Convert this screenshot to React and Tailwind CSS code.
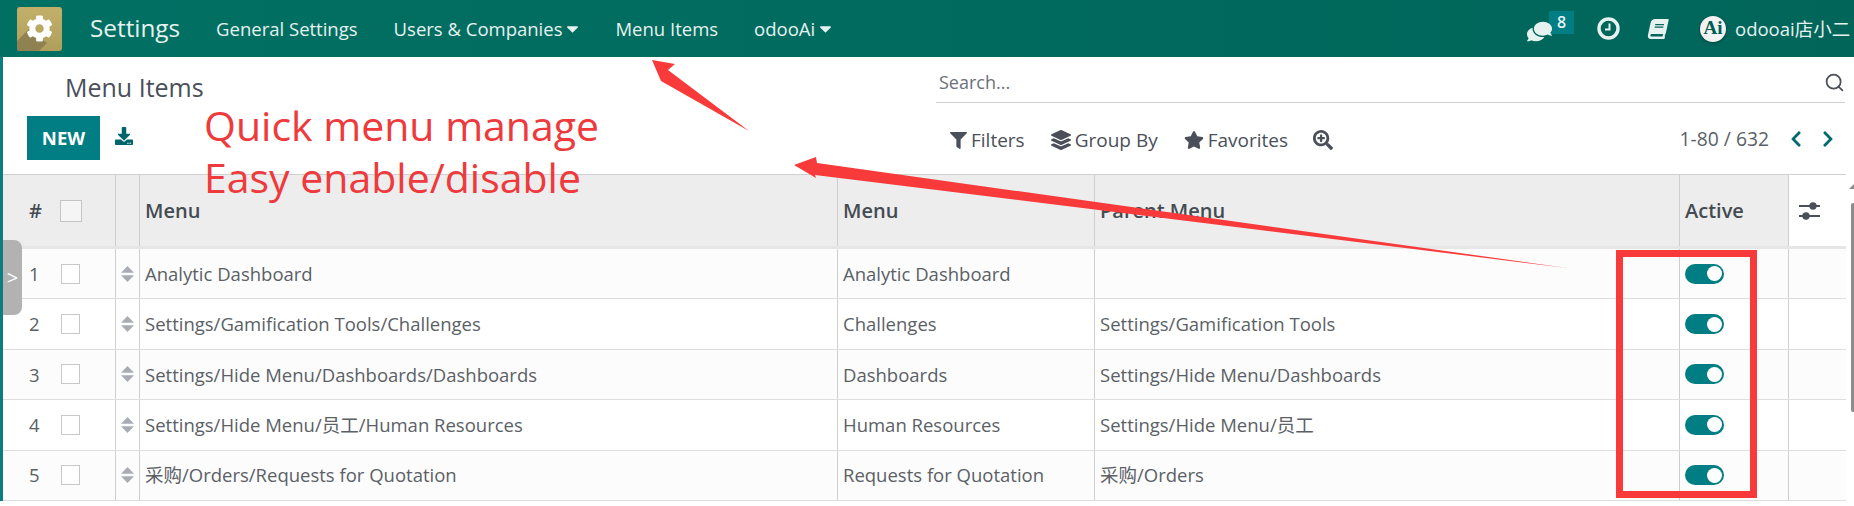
import React from 'react';
import { FaCog, FaComments, FaBook, FaDownload, FaFilter, FaLayerGroup, FaStar, FaSearchPlus, FaChevronLeft, FaChevronRight, FaCaretDown } from 'react-icons/fa';
import { Search } from 'lucide-react';

const rows = [
  ['Analytic Dashboard', 'Analytic Dashboard', ''],
  ['Settings/Gamification Tools/Challenges', 'Challenges', 'Settings/Gamification Tools'],
  ['Settings/Hide Menu/Dashboards/Dashboards', 'Dashboards', 'Settings/Hide Menu/Dashboards'],
  ['Settings/Hide Menu/员工/Human Resources', 'Human Resources', 'Settings/Hide Menu/员工'],
  ['采购/Orders/Requests for Quotation', 'Requests for Quotation', '采购/Orders'],
];

const gridCols = 'grid grid-cols-[113px_24px_698px_257px_585px_109px_57px]';

const Toggle = () => (
  <div className="w-[39px] h-[20px] rounded-full bg-[#017e84] flex items-center justify-end pr-[2px]">
    <div className="w-[15px] h-[15px] rounded-full bg-white" />
  </div>
);

const SortHandle = () => (
  <svg width="13" height="16" viewBox="0 0 13 16" className="text-[#a9adb3]">
    <path d="M6.5 0 L13 6.8 H0 Z M6.5 16 L13 9.2 H0 Z" fill="currentColor" />
  </svg>
);

const NavLink = ({ label, caret }) => (
  <div className="flex items-center text-[18.5px] text-[#e6f2f0]">
    {label}
    {caret && <FaCaretDown className="text-[19px] ml-[1px] -mr-[3px]" />}
  </div>
);

const ToolButton = ({ icon, label }) => (
  <div className="flex items-center gap-[4px] text-[19px] text-[#4a4f59]">
    {icon}
    <span>{label}</span>
  </div>
);

const Logo = () => (
  <div className="relative w-[45px] h-[44px] rounded-[3px] overflow-hidden bg-gradient-to-b from-[#c2b06a] to-[#b09f5b] flex items-center justify-center">
    <svg className="absolute left-0 top-0" width="45" height="44" viewBox="0 0 45 44">
      <path d="M12 22 L30 36 L22 44 L0 44 L0 34 Z" fill="#8f8150" />
    </svg>
    <FaCog className="relative text-white text-[27px]" />
  </div>
);

const ClockIcon = () => (
  <svg width="23" height="23" viewBox="0 0 23 23">
    <circle cx="11.5" cy="11.5" r="9.5" fill="none" stroke="#e6f2f0" strokeWidth="3.4" />
    <path d="M12.5 6.5 V12.5 H8" fill="none" stroke="#e6f2f0" strokeWidth="2" />
  </svg>
);

const App = () => {
  return (
    <div className="relative w-[1854px] h-[506px] overflow-hidden bg-white text-[#4c4c4c] font-['Open_Sans','Noto_Sans_CJK_SC',sans-serif]">
      <nav className="h-[57px] bg-gradient-to-r from-[#017063] to-[#01655a] flex items-center pl-[17px]">
        <Logo />
        <div className="ml-[28px] text-[24.3px] text-[#e6f2f0]">Settings</div>
        <div className="ml-[36px] flex items-center gap-[36px]">
          <NavLink label="General Settings" />
          <NavLink label="Users & Companies" caret />
          <NavLink label="Menu Items" />
          <NavLink label="odooAi" caret />
        </div>
        <div className="ml-auto flex items-center text-[#e6f2f0]">
          <div className="flex items-start">
            <FaComments className="text-[25px] mt-[5px] -scale-x-100" />
            <div className="w-[25px] h-[23px] bg-[#017e84] text-[16px] font-semibold flex items-center justify-center -mt-[3px] -ml-[3px]">8</div>
          </div>
          <div className="ml-[23px]"><ClockIcon /></div>
          <FaBook className="text-[20px] ml-[28px] -skew-x-12" />
          <div className="ml-[32px] w-[26px] h-[26px] rounded-full bg-[#f2f2f2] shadow-[0_1px_3px_rgba(0,0,0,0.35)] text-[#015c52] text-[19px] font-bold flex items-center justify-center font-['Liberation_Serif',serif]">Ai</div>
          <div className="ml-[9px] w-[119px] whitespace-nowrap overflow-hidden text-[18.5px]">odooai店小二</div>
        </div>
      </nav>

      <div className="border-l-[3px] border-[#0a7d80]">
        <div className="h-[117px] flex">
          <div className="w-[933px] pl-[24px]">
            <div className="pl-[38px] pt-[15px] text-[25px] leading-[30px] text-[#4a4f59]">Menu Items</div>
            <div className="mt-[14px] flex items-center">
              <div className="w-[73px] h-[44px] bg-[#017e84] text-white text-[18.5px] font-bold flex items-center justify-center">NEW</div>
              <FaDownload className="ml-[15px] -mt-[4px] text-[18px] text-[#01666b]" />
            </div>
          </div>
          <div className="flex-1 pr-[9px]">
            <div className="h-[46px] border-b border-[#cfcfd4] flex items-center justify-between pl-[3px] pt-[6px] text-[18px] text-[#6c7079]">
              <span>Search...</span>
              <Search size={21} className="text-[#4a4f59]" />
            </div>
            <div className="h-[70px] flex items-center pl-[14px] pt-[4px]">
              <ToolButton icon={<FaFilter className="text-[17px]" />} label="Filters" />
              <div className="ml-[26px]"><ToolButton icon={<FaLayerGroup className="text-[20px]" />} label="Group By" /></div>
              <div className="ml-[26px]"><ToolButton icon={<FaStar className="text-[20px]" />} label="Favorites" /></div>
              <FaSearchPlus className="ml-[25px] text-[20px] text-[#4a4f59]" />
              <div className="ml-auto flex items-center -mt-[2px]">
                <span className="text-[19.3px] text-[#5a5f68]">1-80 / 632</span>
                <FaChevronLeft className="ml-[18px] text-[18px] text-[#016a70]" />
                <FaChevronRight className="ml-[14px] mr-[8px] text-[18px] text-[#016a70]" />
              </div>
            </div>
          </div>
        </div>

        <div className="w-[1843px] border-t border-[#cfcfcf]">
          <div className={`${gridCols} h-[74px] border-b-[3px] border-[#e6e6e6] text-[20px] font-semibold text-[#444b52]`}>
            <div className="bg-[#ededed] border-r border-[#cfcfcf] flex items-center pl-[26px]">
              <span className="w-[31px]">#</span>
              <div className="w-[22px] h-[22px] border border-[#c4c4c4] bg-[#f5f5f5]" />
            </div>
            <div className="bg-[#ededed] border-r border-[#cfcfcf]" />
            <div className="bg-[#ededed] border-r border-[#cfcfcf] flex items-center pl-[5px]">Menu</div>
            <div className="bg-[#ededed] border-r border-[#cfcfcf] flex items-center pl-[5px]">Menu</div>
            <div className="bg-[#ededed] border-r border-[#cfcfcf] flex items-center pl-[5px]">Parent Menu</div>
            <div className="bg-[#ededed] border-r border-[#cfcfcf] flex items-center pl-[5px]">Active</div>
            <div className="flex items-center pl-[10px]">
              <svg width="21" height="18" viewBox="0 0 21 18" className="text-[#4a4f59]">
                <path d="M0 4 H21 M0 14 H21" stroke="currentColor" strokeWidth="2" />
                <circle cx="14" cy="4" r="3.7" fill="currentColor" />
                <circle cx="7" cy="14" r="3.7" fill="currentColor" />
              </svg>
            </div>
          </div>

          {rows.map((row, i) => (
            <div key={i} className={`${gridCols} h-[50.4px] border-b border-[#dedede] text-[18.5px] text-[#5b5f66] ${i % 2 === 0 ? 'bg-[#fcfcfc]' : 'bg-white'}`}>
              <div className="border-r border-[#cfcfcf] flex items-center pl-[26px]">
                <span className="w-[32px]">{i + 1}</span>
                <div className="w-[19px] h-[20px] border border-[#c8c8c8] bg-white" />
              </div>
              <div className="border-r border-[#cfcfcf] flex items-center justify-center"><SortHandle /></div>
              <div className="border-r border-[#cfcfcf] flex items-center pl-[5px]">{row[0]}</div>
              <div className="border-r border-[#cfcfcf] flex items-center pl-[5px]">{row[1]}</div>
              <div className="border-r border-[#cfcfcf] flex items-center pl-[5px]">{row[2]}</div>
              <div className="border-r border-[#cfcfcf] flex items-center pl-[5px]"><Toggle /></div>
              <div />
            </div>
          ))}
        </div>
      </div>

      {/* side tab */}
      <div className="absolute left-[3px] top-[240px] w-[19px] h-[75px] bg-[#b2b2b2] rounded-r-[8px] flex items-center justify-center text-white text-[20px]">&gt;</div>

      {/* scrollbar */}
      <div className="absolute left-[1851px] top-[203px] w-[3px] h-[209px] bg-[#8c8c8c] rounded-l-[2px]" />
      <svg className="absolute left-[1849px] top-[184px]" width="5" height="5" viewBox="0 0 5 5">
        <path d="M5 0 V5 H0 Z" fill="#8c8c8c" />
      </svg>

      {/* annotation on top of the screenshot */}
      <div className="absolute left-[204px] top-[99px] text-[41px] leading-[52px] text-[#ee3a3d] whitespace-nowrap">
        <div>Quick menu manage</div>
        <div>Easy enable/disable</div>
      </div>
      <div className="absolute left-[1616px] top-[250px] w-[141px] h-[248px] border-[7px] border-[#f83a3a]" />
      <svg className="absolute left-0 top-0 pointer-events-none" width="1854" height="506">
        <path d="M652 60 L675 64 L668 70 L749 131 L661 81 Z" fill="#f83a3a" />
        <path d="M794 165 L816 157 L817 163 L1567 268 L815 175 L816 178 Z" fill="#f83a3a" />
      </svg>
    </div>
  );
};

export default App;
